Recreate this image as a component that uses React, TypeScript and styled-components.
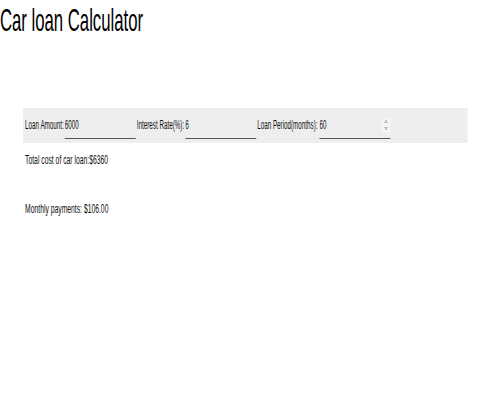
import React from "react";
import styled, { createGlobalStyle } from "styled-components";

const SCALE = 0.522;

const Global = createGlobalStyle`
  html, body {
    margin: 0;
    padding: 0;
    background: #ffffff;
    overflow: hidden;
  }
  body {
    font-family: "Liberation Sans", Arial, sans-serif;
    color: #111;
  }
`;

const Page = styled.div`
  width: ${Math.round(500 / SCALE)}px;
  transform: scaleX(${SCALE});
  transform-origin: 0 0;
  display: flex;
  flex-direction: column;
`;

const Title = styled.h1`
  margin: 2px 0 0 0;
  font-size: 32px;
  font-weight: normal;
  line-height: 37px;
  color: #000;
`;

const Form = styled.form`
  margin: 69px 0 0 44px;
  width: 852px;
  height: 35px;
  box-sizing: border-box;
  padding: 3px 4px 4px;
  background: #eeeeee;
  display: flex;
  align-items: center;
`;

const Label = styled.label<{ $gap?: number }>`
  font-size: 12px;
  line-height: 14px;
  white-space: nowrap;
  margin-right: ${(p) => p.$gap ?? 2}px;
`;

const Input = styled.input`
  width: 136px;
  height: 28px;
  box-sizing: border-box;
  margin: 0 2px 0 0;
  padding: 0 1px 0 0;
  border: none;
  border-bottom: 1px solid #555;
  background: transparent;
  font-family: "Liberation Sans", Arial, sans-serif;
  font-size: 12px;
  color: #111;
  outline: none;
  &::-webkit-inner-spin-button {
    opacity: 0.45;
  }
`;

const Result = styled.p<{ $top: number }>`
  margin: ${(p) => p.$top}px 0 0 48px;
  font-size: 13px;
  line-height: 15px;
  color: #111;
`;

export default function App() {
  return (
    <>
      <Global />
      <Page>
        <Title>Car loan Calculator</Title>
        <Form onSubmit={(e) => e.preventDefault()}>
          <Label htmlFor="amount">Loan Amount:</Label>
          <Input id="amount" type="text" defaultValue="6000" />
          <Label htmlFor="rate">Interest Rate(%):</Label>
          <Input id="rate" type="text" defaultValue="6" />
          <Label htmlFor="period" $gap={4}>Loan Period(months):</Label>
          <Input id="period" type="number" defaultValue="60" />
        </Form>
        <Result $top={9}>Total cost of car loan:$6360</Result>
        <Result $top={34}>Monthly payments: $106.00</Result>
      </Page>
    </>
  );
}
